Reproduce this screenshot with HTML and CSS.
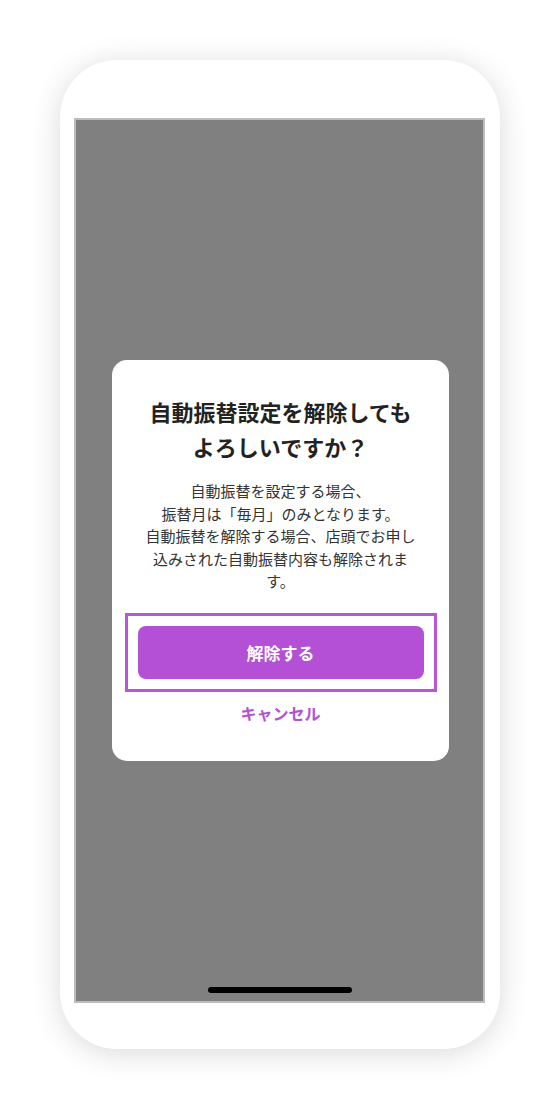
FILE: index.html
```html
<!DOCTYPE html>
<html lang="ja">
<head>
<meta charset="utf-8">
<title>自動振替設定の解除</title>
<link rel="stylesheet" href="styles.css">
</head>
<body>
<div class="stage">
  <div class="phone">
    <div class="screen">
      <div class="dialog">
        <h1 class="title">自動振替設定を解除してもよろしいですか？</h1>
        <p class="message">自動振替を設定する場合、<br>振替月は「毎月」のみとなります。<br>自動振替を解除する場合、店頭でお申し込みされた自動振替内容も解除されます。</p>
        <div class="focus-frame">
          <button class="primary" type="button">解除する</button>
        </div>
        <button class="cancel" type="button">キャンセル</button>
      </div>
      <div class="home-indicator"></div>
    </div>
  </div>
</div>
</body>
</html>
```
FILE: styles.css
```css
html, body {
  margin: 0;
  padding: 0;
  background: #ffffff;
}
body {
  width: 560px;
  height: 1108px;
  overflow: hidden;
  font-family: "Noto Sans CJK JP", "Noto Sans", sans-serif;
}
.stage {
  padding: 60px 0 0 60px;
}
.phone {
  box-sizing: border-box;
  width: 440px;
  height: 989px;
  border-radius: 57px;
  background: #ffffff;
  box-shadow: 0 4px 30px rgba(0, 0, 0, 0.15);
  padding: 58px 15px 46px 14px;
}
.screen {
  box-sizing: border-box;
  position: relative;
  width: 411px;
  height: 885px;
  border: 2px solid #bcbcbc;
  background: #808080;
  display: flex;
  align-items: center;
  justify-content: center;
}
.dialog {
  box-sizing: border-box;
  width: 337px;
  margin-left: 2px;
  background: #ffffff;
  border-radius: 15px;
  padding: 34px 12px 36px;
  display: flex;
  flex-direction: column;
  align-items: center;
}
.title {
  width: 280px;
  margin: 0;
  font-size: 22px;
  line-height: 35px;
  font-weight: 700;
  color: #222222;
  text-align: center;
}
.message {
  width: 280px;
  margin: 16px 0 0;
  font-size: 15px;
  line-height: 22.5px;
  font-weight: 400;
  color: #333333;
  text-align: center;
}
.focus-frame {
  margin-top: 20px;
  padding: 10px;
  border: 3px solid #b857d9;
  display: flex;
}
.primary {
  width: 286px;
  height: 53px;
  border: none;
  border-radius: 8px;
  background: #b450d6;
  color: #ffffff;
  font-family: inherit;
  font-size: 17px;
  font-weight: 700;
}
.cancel {
  margin-top: 9px;
  padding: 0;
  border: none;
  background: none;
  color: #b450d6;
  font-family: inherit;
  font-size: 16px;
  line-height: 24px;
  font-weight: 700;
}
.home-indicator {
  position: absolute;
  left: 132px;
  bottom: 8px;
  width: 144px;
  height: 6px;
  border-radius: 3px;
  background: #000000;
}
```
